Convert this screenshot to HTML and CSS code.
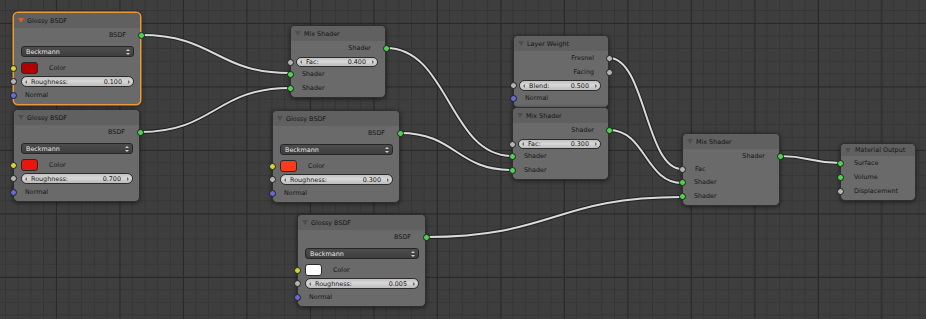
FILE: index.html
```html
<!DOCTYPE html>
<html lang="en">
<head>
    <meta charset="UTF-8">
    <title>Node Editor</title>
    <link rel="stylesheet" href="styles.css">
</head>
<body>
    <div class="editor">
        <svg class="links" width="926" height="319" viewBox="0 0 926 319">
            <g class="link-shadow">
                <path d="M141,35 C215.5,35 215.5,73 290,73"/>
                <path d="M140,132 C215,132 215,88 290,88"/>
                <path d="M386,48 C449,48 449,156 512,156"/>
                <path d="M400,133 C456,133 456,170 512,170"/>
                <path d="M609,58 C645.5,58 645.5,169 682,169"/>
                <path d="M609,130 C645.5,130 645.5,183 682,183"/>
                <path d="M426,237 C554,237 554,197 682,197"/>
                <path d="M780,156 C810,156 810,163 840,163"/>
            </g>
            <g class="link-wire">
                <path d="M141,35 C215.5,35 215.5,73 290,73"/>
                <path d="M140,132 C215,132 215,88 290,88"/>
                <path d="M386,48 C449,48 449,156 512,156"/>
                <path d="M400,133 C456,133 456,170 512,170"/>
                <path d="M609,58 C645.5,58 645.5,169 682,169"/>
                <path d="M609,130 C645.5,130 645.5,183 682,183"/>
                <path d="M426,237 C554,237 554,197 682,197"/>
                <path d="M780,156 C810,156 810,163 840,163"/>
            </g>
        </svg>

        <!-- glossy 1 (active) -->
        <div class="node glossy selected n-g1">
            <div class="node-head"><span class="tri"></span>Glossy BSDF</div>
            <div class="row out">BSDF<span class="sock green"></span></div>
            <div class="menu-row"><div class="dropdown">Beckmann<span class="updown"></span></div></div>
            <div class="row color-row"><span class="sock yellow"></span><span class="swatch sw-dark"></span>Color</div>
            <div class="slider-row"><span class="sock grey"></span><div class="slider"><span>Roughness:</span><span>0.100</span></div></div>
            <div class="row"><span class="sock blue"></span>Normal</div>
        </div>

        <!-- glossy 2 -->
        <div class="node glossy n-g2">
            <div class="node-head"><span class="tri"></span>Glossy BSDF</div>
            <div class="row out">BSDF<span class="sock green"></span></div>
            <div class="menu-row"><div class="dropdown">Beckmann<span class="updown"></span></div></div>
            <div class="row color-row"><span class="sock yellow"></span><span class="swatch sw-red"></span>Color</div>
            <div class="slider-row"><span class="sock grey"></span><div class="slider"><span>Roughness:</span><span>0.700</span></div></div>
            <div class="row"><span class="sock blue"></span>Normal</div>
        </div>

        <!-- mix 1 -->
        <div class="node mix n-m1">
            <div class="node-head"><span class="tri"></span>Mix Shader</div>
            <div class="row out">Shader<span class="sock green"></span></div>
            <div class="fac-row"><span class="sock grey"></span><div class="slider"><span>Fac:</span><span>0.400</span></div></div>
            <div class="row"><span class="sock green"></span>Shader</div>
            <div class="row"><span class="sock green"></span>Shader</div>
        </div>

        <!-- glossy 3 -->
        <div class="node glossy n-g3">
            <div class="node-head"><span class="tri"></span>Glossy BSDF</div>
            <div class="row out">BSDF<span class="sock green"></span></div>
            <div class="menu-row"><div class="dropdown">Beckmann<span class="updown"></span></div></div>
            <div class="row color-row"><span class="sock yellow"></span><span class="swatch sw-orange"></span>Color</div>
            <div class="slider-row"><span class="sock grey"></span><div class="slider"><span>Roughness:</span><span>0.300</span></div></div>
            <div class="row"><span class="sock blue"></span>Normal</div>
        </div>

        <!-- glossy 4 -->
        <div class="node glossy n-g4">
            <div class="node-head"><span class="tri"></span>Glossy BSDF</div>
            <div class="row out">BSDF<span class="sock green"></span></div>
            <div class="menu-row"><div class="dropdown">Beckmann<span class="updown"></span></div></div>
            <div class="row color-row"><span class="sock yellow"></span><span class="swatch sw-white"></span>Color</div>
            <div class="slider-row"><span class="sock grey"></span><div class="slider"><span>Roughness:</span><span>0.005</span></div></div>
            <div class="row"><span class="sock blue"></span>Normal</div>
        </div>

        <!-- layer weight -->
        <div class="node n-lw">
            <div class="node-head"><span class="tri"></span>Layer Weight</div>
            <div class="row out">Fresnel<span class="sock grey"></span></div>
            <div class="row out">Facing<span class="sock grey"></span></div>
            <div class="blend-row"><span class="sock grey"></span><div class="slider"><span>Blend:</span><span>0.500</span></div></div>
            <div class="row"><span class="sock blue"></span>Normal</div>
        </div>

        <!-- mix 2 -->
        <div class="node mix n-m2">
            <div class="node-head"><span class="tri"></span>Mix Shader</div>
            <div class="row out">Shader<span class="sock green"></span></div>
            <div class="fac-row"><span class="sock grey"></span><div class="slider"><span>Fac:</span><span>0.300</span></div></div>
            <div class="row"><span class="sock green"></span>Shader</div>
            <div class="row"><span class="sock green"></span>Shader</div>
        </div>

        <!-- mix 3 -->
        <div class="node mix n-m3">
            <div class="node-head"><span class="tri"></span>Mix Shader</div>
            <div class="row out">Shader<span class="sock green"></span></div>
            <div class="row fac-plain"><span class="sock grey"></span>Fac</div>
            <div class="row"><span class="sock green"></span>Shader</div>
            <div class="row"><span class="sock green"></span>Shader</div>
        </div>

        <!-- output -->
        <div class="node output n-out">
            <div class="node-head"><span class="tri"></span>Material Output</div>
            <div class="row"><span class="sock green"></span>Surface</div>
            <div class="row"><span class="sock green"></span>Volume</div>
            <div class="row"><span class="sock grey"></span>Displacement</div>
        </div>
    </div>
</body>
</html>
```

FILE: styles.css
```css
body {
    margin: 0;
    overflow: hidden;
    background: #3d3d3d;
    font-family: "DejaVu Sans", sans-serif;
}
.editor {
    position: relative;
    width: 926px;
    height: 319px;
    overflow: hidden;
    background-color: #3e3e3e;
    background-image:
        linear-gradient(to right, #2a2a2a 1px, transparent 1px),
        linear-gradient(to bottom, #2a2a2a 1px, transparent 1px),
        linear-gradient(to right, #363636 1px, transparent 1px),
        linear-gradient(to bottom, #363636 1px, transparent 1px);
    background-size: 63.5px 63.5px, 63.5px 63.5px, 12.7px 12.7px, 12.7px 12.7px;
    background-position: 56px 23px, 56px 23px, 5px 10px, 5px 10px;
}
.links {
    position: absolute;
    left: 0;
    top: 0;
}
.links path {
    fill: none;
}
.link-shadow path {
    stroke: #1c1c1c;
    stroke-width: 4;
    stroke-opacity: 0.8;
}
.link-wire path {
    stroke: #dadada;
    stroke-width: 2;
}

/* nodes */
.node {
    position: absolute;
    box-sizing: border-box;
    background: #6a6a6a;
    border: 1px solid #2e2e2e;
    border-radius: 5px;
    box-shadow: 0 1px 4px rgba(0,0,0,0.55);
    font-size: 6.4px;
    color: #151515;
    padding-bottom: 2px;
}
.node.selected {
    border-color: #eb9a3a;
    box-shadow: 0 0 0 0.5px #eb9a3a, 0 1px 4px rgba(0,0,0,0.55);
}
.node-head {
    height: 15px;
    display: flex;
    align-items: center;
    padding-left: 13px;
    background: #606060;
    border-radius: 4px 4px 0 0;
    position: relative;
}
.tri {
    position: absolute;
    left: 4px;
    top: 5px;
    width: 0;
    height: 0;
    border-left: 3px solid transparent;
    border-right: 3px solid transparent;
    border-top: 5px solid #4e4e4e;
}
.selected .tri {
    border-top-color: #d4622a;
}
.row {
    position: relative;
    height: 14px;
    display: flex;
    align-items: center;
    padding-left: 11px;
}
.row.out {
    justify-content: flex-end;
    padding-left: 0;
    padding-right: 14px;
}

/* sockets */
.sock {
    position: absolute;
    left: -4.5px;
    top: 50%;
    width: 5px;
    height: 5px;
    margin-top: -3.5px;
    border-radius: 50%;
    border: 1px solid #1e1e1e;
}
.out .sock {
    left: auto;
    right: -4.5px;
}
.green { background: #4fd24f; }
.yellow { background: #d2d23a; }
.grey { background: #b4b4b4; }
.blue { background: #6a6ad6; }

/* glossy widgets */
.menu-row {
    padding: 4px 6px 0 7px;
}
.dropdown {
    position: relative;
    height: 11px;
    box-sizing: border-box;
    border: 1px solid #262626;
    border-radius: 3px;
    background: linear-gradient(#4d4d4d, #3e3e3e);
    color: #e8e8e8;
    display: flex;
    align-items: center;
    padding-left: 4px;
}
.updown {
    position: absolute;
    right: 3px;
    top: 2px;
    width: 0;
    height: 0;
    border-left: 2px solid transparent;
    border-right: 2px solid transparent;
    border-bottom: 2.5px solid #d0d0d0;
}
.updown::after {
    content: "";
    position: absolute;
    left: -2px;
    top: 3.5px;
    border-left: 2px solid transparent;
    border-right: 2px solid transparent;
    border-top: 2.5px solid #d0d0d0;
}
.color-row {
    margin-top: 5px;
    height: 12px;
    padding-left: 7px;
}
.swatch {
    width: 17px;
    height: 12px;
    box-sizing: border-box;
    border: 1px solid #2a2a2a;
    border-radius: 3px;
    margin-right: 11px;
}
.sw-dark { background: #b00202; }
.sw-red { background: #e8160c; }
.sw-orange { background: #fb3b1c; }
.sw-white { background: #ffffff; }

.slider-row, .fac-row, .blend-row {
    position: relative;
    display: flex;
    align-items: center;
    padding: 0 6px 0 7px;
}
.slider-row {
    margin-top: 2px;
    height: 11px;
}
.slider-row + .row {
    margin-top: 1px;
}
.fac-row {
    margin-top: 2px;
    height: 10px;
    padding-left: 5px;
    padding-right: 7px;
}
.blend-row {
    margin-top: 1px;
    height: 11px;
    padding-left: 5px;
    padding-right: 7px;
}
.slider {
    position: relative;
    flex: 1;
    height: 100%;
    box-sizing: border-box;
    border: 1px solid #2c2c2c;
    border-radius: 6px;
    background: linear-gradient(#c2c2c2, #d8d8d8 45%, #bcbcbc);
    display: flex;
    justify-content: space-between;
    align-items: center;
    padding: 0 11px 0 9px;
}
.slider::before,
.slider::after {
    content: "";
    position: absolute;
    top: 50%;
    margin-top: -2px;
    border-top: 2px solid transparent;
    border-bottom: 2px solid transparent;
}
.slider::before {
    left: 3px;
    border-right: 2.5px solid #6a6a6a;
}
.slider::after {
    right: 3px;
    border-left: 2.5px solid #6a6a6a;
}
.fac-plain {
    margin-top: 0;
    height: 12px;
    padding-left: 12px;
}
.output .node-head {
    height: 12px;
    padding-left: 14px;
}
.output .row {
    padding-left: 13px;
}
.output .tri {
    top: 4px;
}

/* placement on the canvas */
.n-g1 { left: 13px; top: 12px; width: 128px; }
.n-g2 { left: 13px; top: 109px; width: 127px; }
.n-m1 { left: 290px; top: 25px; width: 96px; }
.n-g3 { left: 272px; top: 110px; width: 128px; }
.n-g4 { left: 297px; top: 214px; width: 129px; }
.n-lw { left: 513px; top: 35px; width: 96px; }
.n-m2 { left: 512px; top: 107px; width: 97px; }
.n-m3 { left: 682px; top: 133px; width: 98px; }
.n-out { left: 840px; top: 143px; width: 76px; }
```
